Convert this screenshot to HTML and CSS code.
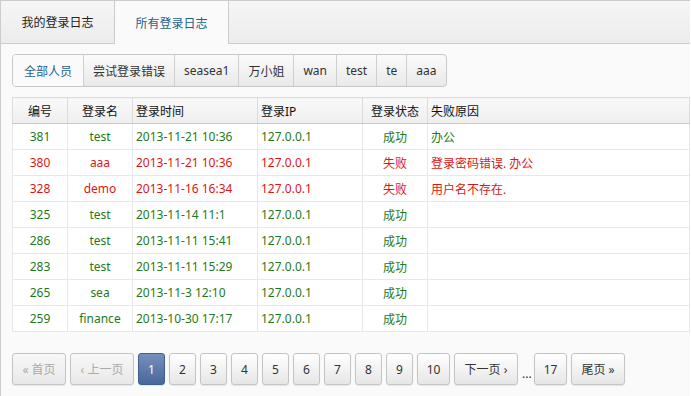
FILE: index.html
```html
<!DOCTYPE html>
<html lang="zh-CN">
<head>
    <meta charset="UTF-8">
    <title>登录日志</title>
    <link rel="stylesheet" href="styles.css">
</head>
<body>
    <div class="panel">
        <div class="tabs">
            <a class="tab">我的登录日志</a>
            <a class="tab active">所有登录日志</a>
        </div>
        <div class="content">
            <div class="filter">
                <a class="active">全部人员</a>
                <a>尝试登录错误</a>
                <a>seasea1</a>
                <a>万小姐</a>
                <a>wan</a>
                <a>test</a>
                <a>te</a>
                <a>aaa</a>
            </div>
            <table class="log">
                <colgroup>
                    <col style="width:55px">
                    <col style="width:65px">
                    <col style="width:125px">
                    <col style="width:105px">
                    <col style="width:65px">
                    <col>
                </colgroup>
                <thead>
                    <tr>
                        <th class="c">编号</th>
                        <th class="c">登录名</th>
                        <th>登录时间</th>
                        <th>登录IP</th>
                        <th class="c">登录状态</th>
                        <th>失败原因</th>
                    </tr>
                </thead>
                <tbody>
                    <tr class="ok"><td class="c">381</td><td class="c">test</td><td>2013-11-21 10:36</td><td>127.0.0.1</td><td class="c">成功</td><td>办公</td></tr>
                    <tr class="fail"><td class="c">380</td><td class="c">aaa</td><td>2013-11-21 10:36</td><td>127.0.0.1</td><td class="c">失败</td><td>登录密码错误. 办公</td></tr>
                    <tr class="fail"><td class="c">328</td><td class="c">demo</td><td>2013-11-16 16:34</td><td>127.0.0.1</td><td class="c">失败</td><td>用户名不存在.</td></tr>
                    <tr class="ok"><td class="c">325</td><td class="c">test</td><td>2013-11-14 11:1</td><td>127.0.0.1</td><td class="c">成功</td><td></td></tr>
                    <tr class="ok"><td class="c">286</td><td class="c">test</td><td>2013-11-11 15:41</td><td>127.0.0.1</td><td class="c">成功</td><td></td></tr>
                    <tr class="ok"><td class="c">283</td><td class="c">test</td><td>2013-11-11 15:29</td><td>127.0.0.1</td><td class="c">成功</td><td></td></tr>
                    <tr class="ok"><td class="c">265</td><td class="c">sea</td><td>2013-11-3 12:10</td><td>127.0.0.1</td><td class="c">成功</td><td></td></tr>
                    <tr class="ok"><td class="c">259</td><td class="c">finance</td><td>2013-10-30 17:17</td><td>127.0.0.1</td><td class="c">成功</td><td></td></tr>
                </tbody>
            </table>
            <div class="pager">
                <a class="disabled wide">« 首页</a>
                <a class="disabled wider">‹ 上一页</a>
                <a class="current">1</a>
                <a>2</a>
                <a>3</a>
                <a>4</a>
                <a>5</a>
                <a>6</a>
                <a>7</a>
                <a>8</a>
                <a>9</a>
                <a class="num2">10</a>
                <a class="wider">下一页 ›</a>
                <span class="dots">...</span>
                <a class="num2">17</a>
                <a class="wide">尾页 »</a>
            </div>
        </div>
    </div>
</body>
</html>
```

FILE: styles.css
```css
body {
    margin: 0;
    background: #fff;
    font-family: "Noto Sans", "Noto Sans CJK SC", sans-serif;
    font-size: 12px;
    color: #333;
}
.panel {
    width: 690px;
    height: 396px;
    border-left: 1px solid #ccc;
    border-top: 1px solid #ccc;
    box-sizing: border-box;
    background: #fafafa;
}
.tabs {
    display: flex;
    height: 42px;
    background: linear-gradient(#f6f6f6, #ececec);
    border-bottom: 1px solid #ccc;
}
.tab {
    width: 113px;
    display: flex;
    align-items: center;
    justify-content: center;
    color: #222;
    font-size: 12px;
}
.tab.active {
    background: #fafafa;
    color: #1f5f8b;
    border-left: 1px solid #ccc;
    border-right: 1px solid #ccc;
    height: 43px;
}
.content {
    padding: 10px 0 0 11px;
}
.filter {
    display: inline-flex;
    height: 33px;
    border: 1px solid #c8c8c8;
    border-radius: 4px;
    background: linear-gradient(#fbfbfb, #e9e9e9);
    box-sizing: border-box;
    overflow: hidden;
}
.filter a {
    display: flex;
    align-items: center;
    padding: 0 9px;
    color: #333;
    border-left: 1px solid #cfcfcf;
}
.filter a:first-child {
    border-left: none;
    padding: 0 11px;
    background: #fafafa;
    color: #1f5f8b;
}
.log {
    margin-top: 10px;
    width: 678px;
    border-collapse: collapse;
    border: 1px solid #c8c8c8;
    background: #fff;
    table-layout: fixed;
}
.log th {
    height: 25px;
    font-weight: normal;
    color: #111;
    text-align: left;
    padding: 0 3px;
    background: linear-gradient(#fafafa, #eeeeee);
    border: 1px solid #dcdcdc;
    border-bottom: 1px solid #c8c8c8;
}
.log td {
    height: 25px;
    padding: 0 3px;
    border: 1px solid #e8e8e8;
}
.log .c {
    text-align: center;
}
.ok td {
    color: #1e7a1e;
}
.fail td {
    color: #dd1616;
}
.pager {
    display: flex;
    align-items: center;
    gap: 4px;
    margin-top: 21px;
}
.pager a {
    width: 27px;
    height: 32px;
    box-sizing: border-box;
    display: flex;
    align-items: center;
    justify-content: center;
    border: 1px solid #c4c4c4;
    border-radius: 3px;
    background: linear-gradient(#ffffff, #e6e6e6);
    color: #333;
    box-shadow: 0 1px 1px rgba(0, 0, 0, 0.08);
}
.pager a.num2 {
    width: 33px;
}
.pager a.wide {
    width: 54px;
}
.pager a.wider {
    width: 64px;
}
.pager a.disabled {
    color: #aaa;
    background: linear-gradient(#f8f8f8, #e8e8e8);
}
.pager a.current {
    color: #fff;
    border-color: #3f5f8f;
    background: linear-gradient(#7690bd, #48679a);
}
.pager .dots {
    width: 8px;
    text-align: center;
    color: #333;
    margin-top: 8px;
}
```
